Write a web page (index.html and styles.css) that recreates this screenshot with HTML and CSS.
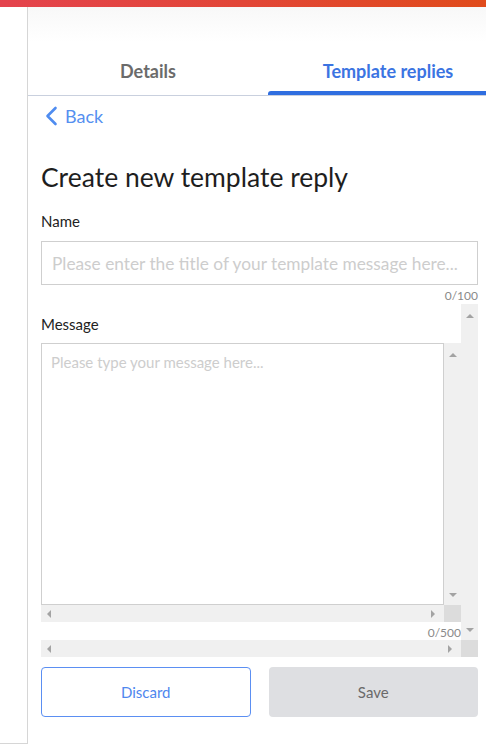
FILE: index.html
```html
<!DOCTYPE html>
<html>
<head>
<meta charset="utf-8">
<link rel="stylesheet" href="styles.css">
</head>
<body>
<div class="topbar"></div>
<div class="layout">
  <aside class="rail"></aside>
  <main class="main">
    <nav class="tabs">
      <div class="tab">Details</div>
      <div class="tab active">Template replies</div>
    </nav>
    <section class="content">
      <a class="back">
        <svg width="14" height="20" viewBox="0 0 14 20"><path d="M11.5 2 L3.5 10 L11.5 18" fill="none" stroke="#4f8cf0" stroke-width="2.6" stroke-linecap="round" stroke-linejoin="round"/></svg>
        <span>Back</span>
      </a>
      <h1 class="title">Create new template reply</h1>
      <label class="label name">Name</label>
      <div class="input">Please enter the title of your template message here...</div>
      <div class="counter c1">0/100</div>
      <div class="scrollbox outer">
        <div class="pane">
          <label class="label msg">Message</label>
          <div class="scrollbox inner">
            <div class="pane">
              <div class="textarea">Please type your message here...</div>
            </div>
            <div class="vbar"><i class="arr up"></i><i class="arr down"></i></div>
            <div class="hbar"><i class="arr left"></i><i class="arr right"></i></div>
            <div class="corner"></div>
          </div>
          <div class="counter c2">0/500</div>
        </div>
        <div class="vbar"><i class="arr up"></i><i class="arr down"></i></div>
        <div class="hbar"><i class="arr left"></i><i class="arr right"></i></div>
        <div class="corner"></div>
      </div>
      <div class="actions">
        <button class="btn discard">Discard</button>
        <button class="btn save">Save</button>
      </div>
    </section>
  </main>
</div>
</body>
</html>
```
FILE: styles.css
```css
* { box-sizing: border-box; }
html, body { margin: 0; padding: 0; background: #fff; }
body { font-family: Lato, "Open Sans", sans-serif; color: #222; width: 486px; height: 748px; overflow: hidden; }

.topbar { height: 7px; background: linear-gradient(90deg, #e4434d 0%, #e24637 50%, #e04b1b 100%); }

.layout { display: flex; }
.rail { width: 28px; height: 737px; border-right: 1px solid #d6d6d6; border-bottom: 1px solid #d6d6d6; flex: none; }
.main { flex: 1; min-width: 0; }

.tabs { height: 89px; display: flex; overflow: hidden; border-bottom: 1px solid #c9d0de; background: linear-gradient(180deg, #f8f8f8 0%, #ffffff 40%); }
.tab { flex: none; width: 240px; display: flex; align-items: flex-end; justify-content: center; padding-bottom: 13px; font-size: 18px; line-height: 22px; font-weight: 700; color: #6b6b6b; }
.tab.active { color: #3b74e2; position: relative; }
.tab.active::after { content: ""; position: absolute; left: 0; right: 0; bottom: 0; height: 4px; background: #2f6ee0; border-radius: 3px 0 0 0; }

.content { padding: 0 8px 0 13px; }

.back { display: flex; align-items: center; gap: 7px; height: 20px; margin-top: 10px; padding-left: 3px; color: #5590f0; font-size: 18px; }
.back svg { display: block; }

.title { margin: 35px 0 0; font-size: 26.5px; font-weight: 400; line-height: 32px; color: #1e1e1e; }

.label { display: block; font-size: 15px; line-height: 18px; color: #222; }
.name { margin-top: 19px; }

.input { margin-top: 11px; height: 44px; border: 1px solid #cfcfcf; padding: 0 10px; display: flex; align-items: center; font-size: 17.3px; color: #cdcdcd; white-space: nowrap; overflow: hidden; }

.counter { text-align: right; font-size: 12px; line-height: 14px; color: #8a8a8a; }
.c1 { margin-top: 4px; }

.scrollbox { display: grid; grid-template-columns: minmax(0, 1fr) 17px; grid-template-rows: minmax(0, 1fr) 17px; }
.outer { height: 353px; margin-top: 1px; }
.inner { height: 279px; margin-top: 10px; }
.pane { min-width: 0; }
.msg { margin-top: 11px; }

.vbar { background: #f0f0f0; display: flex; flex-direction: column; justify-content: space-between; align-items: center; padding: 10px 0 8px; }
.hbar { background: #f0f0f0; display: flex; justify-content: space-between; align-items: center; padding: 0 9px 0 6px; }
.corner { background: #dcdcdc; }

.arr { display: block; width: 0; height: 0; border: 0 solid transparent; }
.arr.up { border-width: 0 4px 4px; border-bottom-color: #a3a3a3; }
.arr.down { border-width: 4px 4px 0; border-top-color: #a3a3a3; }
.arr.left { border-width: 4px 4px 4px 0; border-right-color: #a3a3a3; }
.arr.right { border-width: 4px 0 4px 4px; border-left-color: #a3a3a3; }

.textarea { height: 100%; border: 1px solid #cfcfcf; padding: 9px 9px; font-size: 15px; line-height: 18px; color: #cdcdcd; }

.c2 { margin-top: 4px; }

.actions { display: flex; gap: 18px; margin-top: 10px; }
.btn { flex: 1; height: 50px; border-radius: 4px; font-family: Lato, sans-serif; font-size: 15px; border: 1px solid transparent; }
.discard { background: #fff; border-color: #5b8ff2; color: #4f87ee; }
.save { background: #dedfe2; color: #6a6a6a; }
```
